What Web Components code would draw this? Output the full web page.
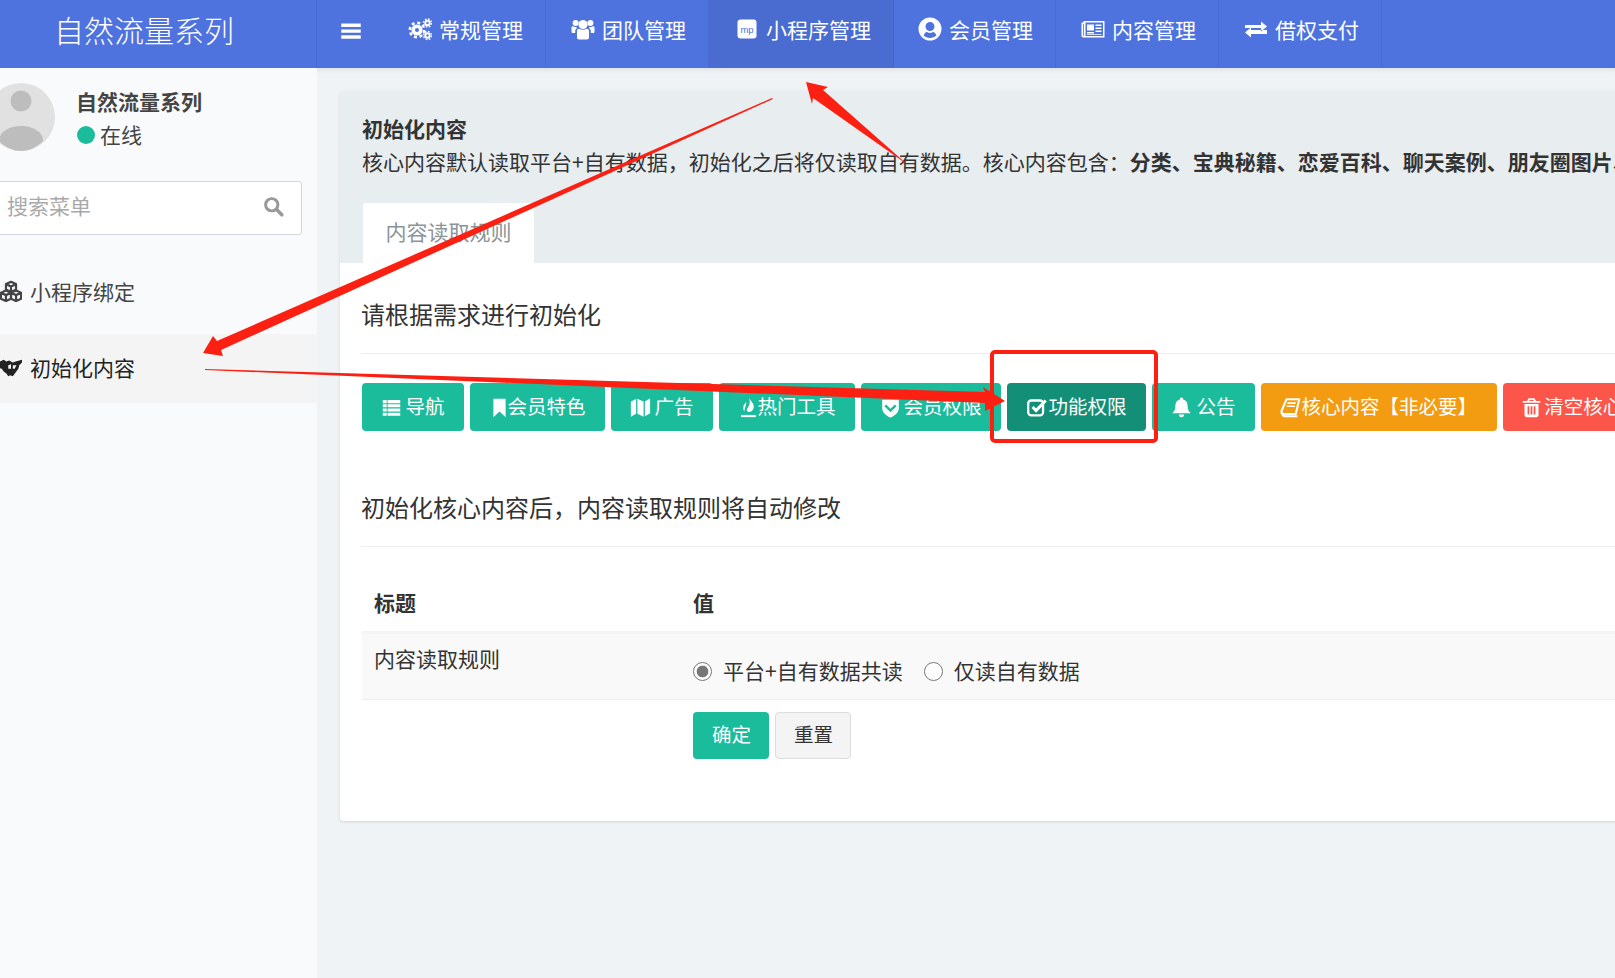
<!DOCTYPE html>
<html lang="zh">
<head>
<meta charset="utf-8">
<title>初始化内容</title>
<style>
  html, body { margin: 0; height: 100%; overflow: hidden; background: #f0f3f6; }
  body { font: 21px/32px "Noto Sans CJK SC", "Noto Sans", sans-serif; color: #333; }
</style>
</head>
<body>
<app-shell>
  <app-header slot="header" title="自然流量系列">
    <nav-item icon="cogs" iw="28">常规管理</nav-item>
    <nav-item icon="users" iw="34">团队管理</nav-item>
    <nav-item icon="mp" iw="35" active>小程序管理</nav-item>
    <nav-item icon="usercircle" iw="33">会员管理</nav-item>
    <nav-item icon="news" iw="34">内容管理</nav-item>
    <nav-item icon="exchange" iw="34">借权支付</nav-item>
  </app-header>
  <side-bar slot="side" name="自然流量系列" status="在线">
    <side-item icon="cubes">小程序绑定</side-item>
    <side-item icon="hands" active>初始化内容</side-item>
  </side-bar>
  <content-panel slot="main" title="初始化内容" tab="内容读取规则">
    <span slot="desc">核心内容默认读取平台+自有数据，初始化之后将仅读取自有数据。核心内容包含：<b>分类、宝典秘籍、恋爱百科、聊天案例、朋友圈图片、海报</b></span>
    <section-title>请根据需求进行初始化</section-title>
    <button-row>
      <action-button icon="list" iw="24">导航</action-button>
      <action-button icon="bookmark" iw="18">会员特色</action-button>
      <action-button icon="map" iw="24">广告</action-button>
      <action-button icon="fire" iw="19">热门工具</action-button>
      <action-button icon="shield" iw="23">会员权限</action-button>
      <action-button icon="check" iw="22" kind="dark">功能权限</action-button>
      <action-button icon="bell" iw="25">公告</action-button>
      <action-button icon="book" iw="21" kind="orange">核心内容【非必要】</action-button>
      <action-button icon="trash" iw="22" kind="red">清空核心内容</action-button>
    </button-row>
    <section-title second>初始化核心内容后，内容读取规则将自动修改</section-title>
    <config-table></config-table>
  </content-panel>
  <red-marks slot="over"></red-marks>
</app-shell>

<script>
const ICONS = {
  bars: '<path d="M3 5h18v3.2H3zM3 10.5h18v3.2H3zM3 16h18v3.2H3z"/>',
  cogs: '<circle cx="9" cy="13" r="3.8" fill="none" stroke="currentColor" stroke-width="3.6"/><circle cx="9" cy="13" r="7.2" fill="none" stroke="currentColor" stroke-width="2.6" stroke-dasharray="3 2.65"/><circle cx="19.5" cy="6" r="2.2" fill="none" stroke="currentColor" stroke-width="2"/><circle cx="19.5" cy="6" r="4" fill="none" stroke="currentColor" stroke-width="1.4" stroke-dasharray="1.7 1.44"/><circle cx="19.5" cy="18.5" r="2.2" fill="none" stroke="currentColor" stroke-width="2"/><circle cx="19.5" cy="18.5" r="4" fill="none" stroke="currentColor" stroke-width="1.4" stroke-dasharray="1.7 1.44"/>',
  users: '<circle cx="12" cy="7.5" r="4.6"/><circle cx="4.6" cy="6" r="3"/><circle cx="19.4" cy="6" r="3"/><path d="M6 14c0-1.6 1.2-2.4 2.4-2.2 1 .7 2.2 1 3.6 1s2.600-.3 3.600-1c1.200-.2 2.400.6 2.400 2.200v6.500c0 1.200-.8 2-2 2H8c-1.200 0-2-.8-2-2z"/><path d="M.5 10.500c0-.8.6-1.200 1.200-1.200.8.5 1.800.8 2.900.8.4 0 .8 0 1.100-.1-.2.8.2 1.300 0 1.500-1 .5-1.500 1.400-1.500 2.700V16H2c-1 0-1.500-.5-1.500-1.500zM23.500 10.500c0-.8-.6-1.200-1.200-1.200-.8.5-1.800.8-2.900.8-.4 0-.8 0-1.100-.1.200.8-.2 1.300 0 1.500 1 .5 1.500 1.400 1.500 2.700V16H22c1 0 1.500-.5 1.500-1.500z"/>',
  mp: '<rect x="2.500" y="2.500" width="19" height="19" rx="3"/><text x="12" y="15.500" text-anchor="middle" font-family="Liberation Sans, sans-serif" font-size="9.500" fill="#4e73df">mp</text>',
  usercircle: '<path fill-rule="evenodd" d="M12 .5a11.500 11.500 0 1 1 0 23 11.500 11.500 0 0 1 0-23zM12 5a4.500 4.500 0 1 0 0 9 4.500 4.500 0 0 0 0-9zM5.500 18.600A9 9 0 0 0 12 21a9 9 0 0 0 6.500-2.400c-.7-2.200-2.200-3.400-3.500-3.600-1 .6-2 .9-3 .9s-2-.3-3-.9c-1.300.2-2.800 1.400-3.500 3.600z"/>',
  news: '<path fill-rule="evenodd" d="M.5 5.500h2V4h21v16.500H2A1.800 1.800 0 0 1 .5 19zM4.500 5.500v13.500h17.500V5.500zM2 7v11.500c0 .5.8.5.8 0V7z"/><path d="M6 7.500h7v6H6zM14.500 7.500h6v1.500h-6zM14.500 10.500h6V12h-6zM14.500 13.500h6V15h-6zM6 15h7v1.500H6zM6 17h14.500v.8H6z"/>',
  exchange: '<path d="M1 8h16V4.500L23 9.500l-6 5V11H1zM23 13H7V10.500L1 15.500l6 5V17h16z"/>',
  list: '<path d="M2 3.500h4.500v3.500H2zM7.500 3.500H22v3.500H7.500zM2 8.300h4.500v3.500H2zM7.500 8.300H22v3.500H7.500zM2 13.100h4.500v3.500H2zM7.500 13.100H22v3.500H7.500zM2 17.900h4.500v3.500H2zM7.500 17.900H22v3.500H7.500z"/>',
  bookmark: '<path d="M5 2h14v21l-7-6.500L5 23z"/>',
  map: '<path d="M1 5.500l6-3.500v17l-6 3.500zM8.500 2l7 3v17.500l-7-3.500zM17 5l6-3.500v17L17 22z"/>',
  fire: '<path d="M13 1c1.500 3.500 5 6 5 10 0 3.500-2.500 6-6 6-1.500-.5-2.500-1.500-1.500-3.500 1-2.500 4-4.500 2.500-12.500zM9.500 5.500c-2 2.500-3.500 4-3.500 7 0 1.500.5 3 1.500 4C7 13 9.500 10.500 9.500 5.500z"/><path d="M3.500 20.500h17V23h-17z"/>',
  shield: '<path fill-rule="evenodd" d="M2.500 3h19v9.500c0 5.500-5 9-9.500 11-4.500-2-9.500-5.500-9.500-11zM7 8.500l-2 2 7 7 7-7-2-2-5 5z"/>',
  check: '<rect x="2.500" y="4" width="17" height="17" rx="3.500" fill="none" stroke="currentColor" stroke-width="2.600"/><path d="M7.500 11.500l4 4L22.500 4" fill="none" stroke="currentColor" stroke-width="3.400"/>',
  bell: '<path d="M12 .5a2 2 0 0 1 1.900 2.400c3.800 1 5.100 4 5.100 8 0 4 2 6.100 3.500 7.600H1.500C3 17 5 15 5 10.900c0-4 1.300-7 5.100-8A2 2 0 0 1 12 .5zM9 20h6a3 3 0 0 1-6 0z"/>',
  book: '<path d="M7.500 2.500h14.500l-4 17H3.500C2 19.500 1.300 18 1.800 16z" fill="none" stroke="currentColor" stroke-width="2.400" stroke-linejoin="round"/><path d="M8.500 7h9.500M7.600 10.500h9.500" stroke="currentColor" stroke-width="1.800"/><path d="M2.500 17.500c0 3.500 1 4.500 3 4.500h14.500" fill="none" stroke="currentColor" stroke-width="2.400"/>',
  trash: '<path fill-rule="evenodd" d="M8.500 1.500h7l1.500 3h5v2.200H2V4.500h5zM10 3.300l-.6 1.200h5.200L14 3.300zM4 8h16v12.500c0 1.500-1 2.500-2.500 2.500h-11C5 23 4 22 4 20.500zM7.500 10.500v9.500h2v-9.500zM11 10.500v9.500h2v-9.500zM14.500 10.500v9.500h2v-9.500z"/>',
  search: '<circle cx="10" cy="10" r="7" fill="none" stroke="currentColor" stroke-width="3.400"/><path d="M15.500 15.500l6 6" fill="none" stroke="currentColor" stroke-width="4" stroke-linecap="round"/>',
  cubes: '<g fill="none" stroke="currentColor" stroke-width="2.400" stroke-linejoin="round"><path d="M12 2l5.500 2.500v6L12 13l-5.500-2.500v-6zM6.500 4.500L12 7l5.500-2.500M12 7v6"/><path d="M6.500 11.500L12 14v6.500L6.500 23 1 20.500V14zM1 14l5.500 2.500L12 14M6.500 16.500V23"/><path d="M17.500 11.500L23 14v6.500L17.500 23 12 20.500V14zM12 14l5.500 2.500L23 14M17.500 16.500V23"/></g>',
  hands: '<path d="M0 6l4-2 3 2 3-1 4 2 3-1 7-2v3l-3 3-1 4-3 4-3 4-3-1-2 1-2-3-3-2-2-3-3-1z"/><path fill="#f4f4f5" d="M9 10l3-1v5h-3zM14 10h4l-2 4h-2z"/>'
}

class UiIcon extends HTMLElement {
  connectedCallback() {
    const size = this.getAttribute('size') || 21
    const shadowRoot = this.attachShadow({mode: 'open'})
    shadowRoot.innerHTML = `
    <style>
      :host { display: inline-flex; color: inherit; line-height: 0; }
      svg { width: ${size}px; height: ${size}px; fill: currentColor; display: block; }
    </style>
    <svg viewBox="0 0 24 24">${ICONS[this.getAttribute('name')] || ''}</svg>
    `
  }
}

class AppShell extends HTMLElement {
  connectedCallback() {
    const shadowRoot = this.attachShadow({mode: 'open'})
    shadowRoot.innerHTML = `
    <style>
      :host { display: block; position: relative; width: 1615px; height: 978px; overflow: hidden; }
      .body { display: flex; height: 910px; }
      .main { flex: 1; min-width: 0; background: #f0f3f6; box-shadow: inset 0 6px 6px -6px rgba(0,0,0,.12); padding: 23px 0 0 23px; overflow: hidden; }
    </style>
    <slot name="header"></slot>
    <div class="body">
      <slot name="side"></slot>
      <div class="main"><slot name="main"></slot></div>
    </div>
    <slot name="over"></slot>
    `
  }
}

class AppHeader extends HTMLElement {
  connectedCallback() {
    const shadowRoot = this.attachShadow({mode: 'open'})
    shadowRoot.innerHTML = `
    <style>
      :host { display: flex; height: 68px; background: #4e73df; color: #fff; }
      .logo { flex: none; box-sizing: border-box; width: 345px; margin-left: -28px; height: 68px; text-align: center; font-size: 30px; font-weight: 300; line-height: 58px; border-right: 1px solid rgba(0,0,0,.05); }
      .toggle { flex: none; box-sizing: border-box; width: 72px; display: flex; align-items: center; justify-content: center; padding: 0 4px 6px 0; }
      .nav { display: flex; }
    </style>
    <div class="logo">${this.getAttribute('title')}</div>
    <div class="toggle"><ui-icon name="bars" size="26"></ui-icon></div>
    <div class="nav"><slot></slot></div>
    `
  }
}

class NavItem extends HTMLElement {
  connectedCallback() {
    const iw = this.getAttribute('iw')
    const shadowRoot = this.attachShadow({mode: 'open'})
    shadowRoot.innerHTML = `
    <style>
      :host { display: flex; align-items: center; box-sizing: border-box; height: 68px; padding: 0 22px 10px 22px; border-right: 1px solid rgba(0,0,0,.05); }
      :host([active]) { background: #4a6cd1; }
      .ic { width: ${iw}px; flex: none; display: flex; justify-content: flex-end; padding-right: 7px; box-sizing: border-box; }
    </style>
    <span class="ic"><ui-icon name="${this.getAttribute('icon')}" size="24"></ui-icon></span>
    <slot></slot>
    `
  }
}

class SideBar extends HTMLElement {
  connectedCallback() {
    const shadowRoot = this.attachShadow({mode: 'open'})
    shadowRoot.innerHTML = `
    <style>
      :host { display: block; flex: none; width: 345px; margin-left: -28px; height: 910px; background: #f9fafc; color: #444; }
      .user { display: flex; padding: 15px 15px 0; height: 68px; gap: 22px; }
      .avatar { width: 68px; height: 68px; display: block; }
      .name { font-weight: 700; line-height: 33px; margin-top: 2px; margin-left: -1px; }
      .status { display: flex; align-items: center; gap: 5px; line-height: 33px; }
      .dot { width: 18px; height: 18px; border-radius: 50%; background: #1abc9c; }
      .search { box-sizing: border-box; display: flex; align-items: center; justify-content: space-between; height: 54px; margin: 30px 15px 0; padding: 0 17px 7px 19px; background: #fff; border: 1px solid #d2d6de; border-radius: 3px; color: #a9a9a9; }
      .search ui-icon { color: #999; margin-top: 4px; }
      .menu { margin-top: 23px; }
    </style>
    <div class="user">
      <svg class="avatar" viewBox="0 0 68 68">
        <circle cx="34" cy="34" r="34" fill="#e1e1e1"/>
        <circle cx="34" cy="18" r="10.500" fill="#bdbdbd"/>
        <path d="M12 58c0-9 10-15 22-15s22 6 22 15c-6 6-14 10-22 10s-16-4-22-10z" fill="#bdbdbd"/>
      </svg>
      <div>
        <div class="name">${this.getAttribute('name')}</div>
        <div class="status"><span class="dot"></span>${this.getAttribute('status')}</div>
      </div>
    </div>
    <div class="search"><span>搜索菜单</span><ui-icon name="search" size="21"></ui-icon></div>
    <div class="menu"><slot></slot></div>
    `
  }
}

class SideItem extends HTMLElement {
  connectedCallback() {
    const shadowRoot = this.attachShadow({mode: 'open'})
    shadowRoot.innerHTML = `
    <style>
      :host { display: flex; align-items: center; gap: 8px; box-sizing: border-box; height: 69px; margin-bottom: 7px; padding: 0 0 4px 28px; color: #444; }
      :host([active]) { background: #f4f4f5; color: #222; }
    </style>
    <ui-icon name="${this.getAttribute('icon')}" size="22"></ui-icon>
    <slot></slot>
    `
  }
}

class ContentPanel extends HTMLElement {
  connectedCallback() {
    const shadowRoot = this.attachShadow({mode: 'open'})
    shadowRoot.innerHTML = `
    <style>
      :host { display: block; width: 1400px; background: #fff; border-radius: 4px; box-shadow: 0 1px 3px rgba(0,0,0,.12); overflow: hidden; }
      .head { background: #e8edf0; padding: 21px 22px 0; height: 172px; box-sizing: border-box; }
      .title { font-weight: 700; line-height: 33px; }
      .desc { white-space: nowrap; line-height: 32px; }
      .tab { box-sizing: border-box; width: 171px; height: 60px; margin: 26px 0 0 1px; padding-top: 12px; text-align: center; background: #fff; border-radius: 3px 3px 0 0; color: #8a9499; }
      .body { padding: 0 22px 62px; }
    </style>
    <div class="head">
      <div class="title">${this.getAttribute('title')}</div>
      <div class="desc"><slot name="desc"></slot></div>
      <div class="tab">${this.getAttribute('tab')}</div>
    </div>
    <div class="body"><slot></slot></div>
    `
  }
}

class SectionTitle extends HTMLElement {
  connectedCallback() {
    const shadowRoot = this.attachShadow({mode: 'open'})
    shadowRoot.innerHTML = `
    <style>
      :host { display: block; font-size: 24px; line-height: 36px; padding: 33px 0 21px; margin-left: -1px; border-bottom: 1px solid #eee; color: #333; }
      :host([second]) { padding-top: 58px; }
    </style>
    <slot></slot>
    `
  }
}

class ButtonRow extends HTMLElement {
  connectedCallback() {
    const shadowRoot = this.attachShadow({mode: 'open'})
    shadowRoot.innerHTML = `
    <style>
      :host { display: flex; gap: 6px; margin-top: 29px; white-space: nowrap; }
    </style>
    <slot></slot>
    `
  }
}

class ActionButton extends HTMLElement {
  connectedCallback() {
    const colors = {dark: '#148f77', orange: '#f39c12', red: '#fc5549', white: '#f4f4f4'}
    const bg = colors[this.getAttribute('kind')] || '#1abc9c'
    const icon = this.getAttribute('icon')
    const shadowRoot = this.attachShadow({mode: 'open'})
    shadowRoot.innerHTML = `
    <style>
      :host { display: inline-flex; flex: none; align-items: center; box-sizing: border-box; height: 48px; padding: 0 19.5px 3px; border-radius: 4px; font-size: 19.5px; color: #fff; background: ${bg}; }
      :host([kind=white]) { color: #333; border: 1px solid #ddd; padding: 0 17px 3px; }
      :host([plain]) { padding: 0 18px 3px; }
      .ic { flex: none; width: ${this.getAttribute('iw')}px; display: flex; margin: 3px 0 0 -1px; }
      .tx { padding-left: 1px; }
    </style>
    ${icon ? `<span class="ic"><ui-icon name="${icon}" size="21"></ui-icon></span>` : ''}
    <span class="tx"><slot></slot></span>
    `
  }
}

class ConfigTable extends HTMLElement {
  connectedCallback() {
    const shadowRoot = this.attachShadow({mode: 'open'})
    shadowRoot.innerHTML = `
    <style>
      :host { display: block; margin-left: 0; }
      .tr { display: grid; grid-template-columns: 331px 1fr; }
      .th { font-weight: 700; padding: 39px 0 13px; border-bottom: 3px solid #f4f4f4; }
      .th div:first-child, .row .lab { padding-left: 12px; }
      .row { background: #f9f9f9; height: 65px; border-bottom: 1px solid #eee; box-sizing: content-box; }
      .lab { padding-top: 8px; }
      .vals { display: flex; align-items: center; height: 32px; padding-top: 20px; }
      .radio { box-sizing: border-box; width: 19px; height: 19px; margin: 3px 11px 0 0; border: 1.5px solid #767676; border-radius: 50%; background: #fff; flex: none; }
      .radio.on { background: radial-gradient(circle, #777 0 5.5px, #fff 6.2px); }
      .v { margin-right: 21px; }
      .btns { display: flex; gap: 6px; margin: 12px 0 0 331px; }
      action-button { height: 47px; }
    </style>
    <div class="tr th"><div>标题</div><div>值</div></div>
    <div class="tr row">
      <div class="lab">内容读取规则</div>
      <div class="vals">
        <span class="radio on"></span><span class="v">平台+自有数据共读</span>
        <span class="radio"></span><span class="v">仅读自有数据</span>
      </div>
    </div>
    <div class="btns">
      <action-button plain>确定</action-button>
      <action-button kind="white">重置</action-button>
    </div>
    `
  }
}

class RedMarks extends HTMLElement {
  connectedCallback() {
    const shadowRoot = this.attachShadow({mode: 'open'})
    shadowRoot.innerHTML = `
    <style>
      :host { display: block; position: absolute; left: 0; top: 0; width: 1615px; height: 978px; pointer-events: none; }
      svg { display: block; }
    </style>
    <svg width="1615" height="978" viewBox="0 0 1615 978">
      <g fill="#fb2012">
        <polygon points="806,82 828,87 823,90 908,165 813,98 812,104"/>
        <polygon points="772,98 773,99 221,350 223,356 203,353 213,336 217,341"/>
        <polygon points="205,369 985,392 983,387 1005,401 985,411 985,403 205,370"/>
      </g>
      <rect x="992" y="352" width="164" height="89" rx="3" fill="none" stroke="#fb2012" stroke-width="4"/>
    </svg>
    `
  }
}

window.customElements.define('ui-icon', UiIcon)
window.customElements.define('app-shell', AppShell)
window.customElements.define('app-header', AppHeader)
window.customElements.define('nav-item', NavItem)
window.customElements.define('side-bar', SideBar)
window.customElements.define('side-item', SideItem)
window.customElements.define('content-panel', ContentPanel)
window.customElements.define('section-title', SectionTitle)
window.customElements.define('button-row', ButtonRow)
window.customElements.define('action-button', ActionButton)
window.customElements.define('config-table', ConfigTable)
window.customElements.define('red-marks', RedMarks)
</script>
</body>
</html>
